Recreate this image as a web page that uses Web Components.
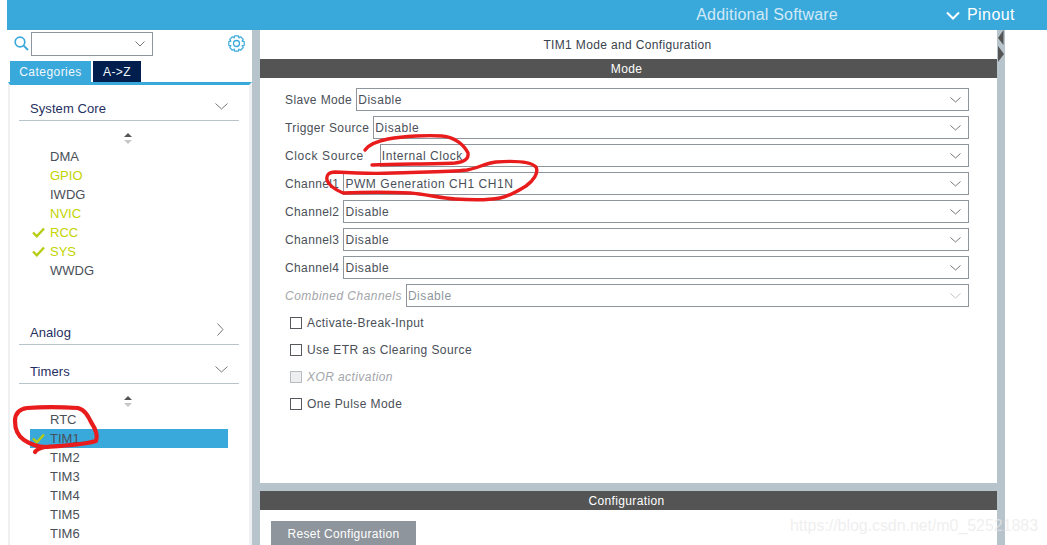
<!DOCTYPE html>
<html>
<head>
<meta charset="utf-8">
<style>
  html, body { margin: 0; padding: 0; background: #fff; }
  body { width: 1047px; height: 545px; overflow: hidden; position: relative; font: 12px "Liberation Sans", Arial, sans-serif; }
</style>
</head>
<body>
<cube-app>
  <cube-topbar></cube-topbar>
  <cube-sidebar slot="side">
    <cube-category title="System Core" open>
      <cube-item>DMA</cube-item>
      <cube-item state="warn">GPIO</cube-item>
      <cube-item>IWDG</cube-item>
      <cube-item state="warn">NVIC</cube-item>
      <cube-item state="warn" checked>RCC</cube-item>
      <cube-item state="warn" checked>SYS</cube-item>
      <cube-item>WWDG</cube-item>
    </cube-category>
    <cube-category title="Analog" style="margin-top:40px"></cube-category>
    <cube-category title="Timers" open style="margin-top:14px">
      <cube-item>RTC</cube-item>
      <cube-item checked selected>TIM1</cube-item>
      <cube-item>TIM2</cube-item>
      <cube-item>TIM3</cube-item>
      <cube-item>TIM4</cube-item>
      <cube-item>TIM5</cube-item>
      <cube-item>TIM6</cube-item>
    </cube-category>
  </cube-sidebar>
  <cube-mode-panel slot="main">
    <cube-select label="Slave Mode" value="Disable"></cube-select>
    <cube-select label="Trigger Source" value="Disable"></cube-select>
    <cube-select label="Clock Source" value="Internal Clock" gap="16" style="--label-track:.62px"></cube-select>
    <cube-select label="Channel1" value="PWM Generation CH1 CH1N"></cube-select>
    <cube-select label="Channel2" value="Disable"></cube-select>
    <cube-select label="Channel3" value="Disable"></cube-select>
    <cube-select label="Channel4" value="Disable"></cube-select>
    <cube-select label="Combined Channels" value="Disable" disabled></cube-select>
    <cube-check style="margin-top:-3px">Activate-Break-Input</cube-check>
    <cube-check>Use ETR as Clearing Source</cube-check>
    <cube-check disabled>XOR activation</cube-check>
    <cube-check>One Pulse Mode</cube-check>
  </cube-mode-panel>
</cube-app>
<cube-overlay></cube-overlay>

<script>
// 8 tooth gear outline, easier than typing the points out
function gearPath(cx, cy, outer, inner) {
  let d = '';
  for (let i = 0; i < 8; i++) {
    const a = i * Math.PI / 4;
    [[-0.42, inner], [-0.24, outer], [0.24, outer], [0.42, inner]].forEach(([off, r], j) => {
      const x = (cx + r * Math.sin(a + off)).toFixed(2);
      const y = (cy - r * Math.cos(a + off)).toFixed(2);
      d += (i === 0 && j === 0 ? 'M' : 'L') + x + ' ' + y;
    });
  }
  return d + 'Z';
}

// top blue header
class CubeTopbar extends HTMLElement {
  connectedCallback() {
    this.attachShadow({mode: 'open'}).innerHTML = `
      <style>
        :host { display: flex; align-items: center; height: 30px; margin-left: 7px; padding-right: 32px; background: #39a9dc; color: #fff; font-size: 16px; letter-spacing: .45px; }
        .soft { color: #d3e9f6; margin-left: auto; margin-right: 108px; letter-spacing: .2px; }
        svg { width: 14px; height: 9px; margin-right: 7px; }
      </style>
      <span class="soft">Additional Software</span>
      <svg viewBox="0 0 14 9"><path d="M1 1.5 7 7.5 13 1.5" fill="none" stroke="#fff" stroke-width="2"/></svg>
      <span>Pinout</span>
    `;
  }
}

// frame with the two gray gutters
class CubeApp extends HTMLElement {
  connectedCallback() {
    this.attachShadow({mode: 'open'}).innerHTML = `
      <style>
        :host { display: block; height: 545px; overflow: hidden; }
        .body { display: grid; grid-template-columns: 245px 8px 737px 8px; margin-left: 7px; height: 515px; }
        .gutter { background: #b8c4cb; }
        .arrows { position: relative; }
        .arrows svg { position: absolute; left: 0; top: 0; width: 8px; height: 42px; }
      </style>
      <slot></slot>
      <div class="body">
        <slot name="side"></slot>
        <div class="gutter"></div>
        <slot name="main"></slot>
        <div class="gutter arrows">
          <svg viewBox="0 0 8 42"><path d="M6.5 0V15L1 8Z M1 16V32L7 24Z" fill="#555"/></svg>
        </div>
      </div>
    `;
  }
}

class CubeSidebar extends HTMLElement {
  connectedCallback() {
    this.attachShadow({mode: 'open'}).innerHTML = `
      <style>
        :host { display: block; overflow: hidden; }
        .search { display: flex; align-items: flex-start; height: 31px; box-sizing: border-box; padding: 2px 7px 0 7px; }
        .lens { width: 15px; height: 15px; margin-top: 4px; margin-right: 2px; }
        .combo { width: 122px; height: 24px; box-sizing: border-box; border: 1px solid #8e959c; display: flex; align-items: center; justify-content: flex-end; padding-right: 7px; }
        .combo svg { width: 10px; height: 6px; }
        .gear { width: 17px; height: 17px; margin-left: auto; margin-top: 3px; }
        .tabs { display: flex; gap: 2px; height: 21px; padding-left: 3px; font-size: 12px; letter-spacing: .45px; color: #f2f7fb; }
        .tab { display: flex; align-items: center; justify-content: center; height: 21px; }
        .cat { width: 81px; background: #39a9dc; }
        .az { width: 48px; background: #001f4f; }
        .panel { margin-left: 1px; height: 463px; border-top: 3px solid #39a9dc; border-left: 2px solid #eef0f1; border-right: 3px solid #eef0f1; padding: 11px 10px 0 9px; }
      </style>
      <div class="search">
        <svg class="lens" viewBox="0 0 15 15"><circle cx="6" cy="6" r="4.8" fill="none" stroke="#39a9dc" stroke-width="1.7"/><path d="M9.6 9.6 14 14" stroke="#39a9dc" stroke-width="2"/></svg>
        <div class="combo"><svg viewBox="0 0 10 6"><path d="M.5 .5 5 5 9.5 .5" fill="none" stroke="#777" stroke-width="1"/></svg></div>
        <svg class="gear" viewBox="0 0 17 17"><path fill="none" stroke="#39a9dc" stroke-width="1.2" stroke-linejoin="round" d="${gearPath(8.5, 8.5, 7.9, 6.1)}"/><circle cx="8.5" cy="8.5" r="3" fill="none" stroke="#39a9dc" stroke-width="1.3"/></svg>
      </div>
      <div class="tabs"><div class="tab cat">Categories</div><div class="tab az">A-&gt;Z</div></div>
      <div class="panel"><slot></slot></div>
    `;
  }
}

class CubeCategory extends HTMLElement {
  connectedCallback() {
    const open = this.hasAttribute('open');
    const chevron = open ? 'M.5 .5 6.5 6 12.5 .5' : 'M.5 .5 6 6.5 .5 12.5';
    this.attachShadow({mode: 'open'}).innerHTML = `
      <style>
        :host { display: block; }
        .head { display: flex; align-items: center; justify-content: space-between; width: 220px; box-sizing: border-box; padding: 0 11px 0 11px; border-bottom: 1px solid #b8c4cb; color: #1f2f5f; font-size: 13px; letter-spacing: .08px; height: 25px; }
        .head svg { width: ${open ? 13 : 7}px; height: ${open ? 7 : 13}px; margin-top: ${open ? -3 : -5}px; margin-right: ${open ? 0 : 4}px; }
        .arrows { display: block; width: 10px; height: 11px; margin: 12px 0 3px 104px; }
        .list { width: 198px; margin-left: 11px; }
      </style>
      <div class="head"><span>${this.getAttribute('title')}</span>
        <svg viewBox="0 0 ${open ? '13 7' : '7 13'}"><path d="${chevron}" fill="none" stroke="#777" stroke-width="1"/></svg></div>
      ${open ? `<svg class="arrows" viewBox="0 0 10 11"><path d="M5 0 9 4H1Z" fill="#555"/><path d="M5 11 9 7H1Z" fill="#c8c8c8"/></svg>
      <div class="list"><slot></slot></div>` : ''}
    `;
  }
}

class CubeItem extends HTMLElement {
  connectedCallback() {
    const warn = this.getAttribute('state') === 'warn';
    const selected = this.hasAttribute('selected');
    const check = this.hasAttribute('checked');
    this.attachShadow({mode: 'open'}).innerHTML = `
      <style>
        :host { display: flex; align-items: center; height: 19px; font-size: 13px; color: ${warn ? '#c3d400' : '#4a4f58'}; background: ${selected ? '#39a9dc' : 'none'}; }
        .mark { width: 20px; height: 19px; display: flex; align-items: center; justify-content: center; padding-right: 3px; box-sizing: border-box; }
        svg { width: 13px; height: 11px; }
      </style>
      <span class="mark">${check ? '<svg viewBox="0 0 13 11"><path d="M1 5.5 4.8 9.3 12 1.5" fill="none" stroke="#b7cc12" stroke-width="2.4"/></svg>' : ''}</span>
      <slot></slot>
    `;
  }
}

class CubeModePanel extends HTMLElement {
  connectedCallback() {
    this.attachShadow({mode: 'open'}).innerHTML = `
      <style>
        :host { display: block; overflow: hidden; background: #fff; }
        .title { height: 29px; display: flex; align-items: center; justify-content: center; color: #39424c; letter-spacing: .35px; padding-right: 2px; }
        .bar { height: 19px; background: #535453; color: #fff; display: flex; align-items: center; justify-content: center; letter-spacing: .35px; padding-right: 4px; }
        .rows { height: 405px; box-sizing: border-box; padding: 10px 28px 0 25px; }
        .sep { height: 8px; background: #b8c4cb; }
        .foot { padding: 11px; }
        .reset { width: 145px; height: 26px; background: #8e959c; color: #fff; display: flex; align-items: center; justify-content: center; letter-spacing: .3px; }
      </style>
      <div class="title">TIM1 Mode and Configuration</div>
      <div class="bar">Mode</div>
      <div class="rows"><slot></slot></div>
      <div class="sep"></div>
      <div class="bar">Configuration</div>
      <div class="foot"><div class="reset">Reset Configuration</div></div>
    `;
  }
}

class CubeSelect extends HTMLElement {
  connectedCallback() {
    const off = this.hasAttribute('disabled');
    this.attachShadow({mode: 'open'}).innerHTML = `
      <style>
        :host { display: flex; align-items: center; height: 23px; margin-bottom: 5px; color: #4a4f58; letter-spacing: .55px; gap: ${this.getAttribute('gap') || 4}px; }
        .label { white-space: nowrap; letter-spacing: var(--label-track, .38px); ${off ? 'font-style: italic; color: #a3a6aa; letter-spacing: .48px;' : ''} }
        .box { flex: 1; height: 23px; box-sizing: border-box; border: 1px solid #8e959c; display: flex; align-items: center; justify-content: space-between; padding: 0 7px 0 1px; ${off ? 'color: #8e959c;' : ''} }
        svg { width: 11px; height: 6px; }
      </style>
      <span class="label">${this.getAttribute('label')}</span>
      <div class="box"><span>${this.getAttribute('value')}</span>
        <svg viewBox="0 0 11 6"><path d="M.5 .5 5.5 5 10.5 .5" fill="none" stroke="${off ? '#c0c4c8' : '#777'}" stroke-width="1"/></svg></div>
    `;
  }
}

class CubeCheck extends HTMLElement {
  connectedCallback() {
    const off = this.hasAttribute('disabled');
    this.attachShadow({mode: 'open'}).innerHTML = `
      <style>
        :host { display: flex; align-items: center; height: 27px; padding-left: 5px; gap: 5px; color: ${off ? '#a3a6aa' : '#4a4f58'}; letter-spacing: .42px; ${off ? 'font-style: italic;' : ''} }
        .tick { width: 12px; height: 12px; box-sizing: border-box; border: 1px solid ${off ? '#b8bcc0' : '#55585c'}; background: ${off ? '#eceeef' : '#fff'}; }
      </style>
      <span class="tick"></span><slot></slot>
    `;
  }
}

// hand drawn red marks and the blog watermark, both on top of the screenshot
class CubeOverlay extends HTMLElement {
  connectedCallback() {
    this.attachShadow({mode: 'open'}).innerHTML = `
      <style>
        :host { display: block; position: absolute; inset: 0; pointer-events: none; }
        svg { position: absolute; left: 0; top: 0; }
        .mark { position: absolute; left: 790px; top: 517px; font-size: 16px; letter-spacing: -.06px; color: rgba(232,232,232,.7); white-space: nowrap; }
      </style>
      <svg width="1047" height="545" fill="none" stroke="#e81c1c" stroke-linecap="round" stroke-linejoin="round">
        <path stroke-width="3.4" d="M365 150C369 144 378 141 388 139C404 136 428 135 442 136C455 137 464 145 468 153C469 159 464 162 455 163C430 164 398 164 372 165"/>
        <path stroke-width="3.4" d="M343 193C336 190 329 186 327 180C326 175 329 172 335 172C352 173 372 174 393 173C420 172 450 172 467 170C478 168 486 163 496 162C510 161 530 161 536 167C539 173 533 181 526 186C518 191 510 196 500 198C485 201 470 200 455 199C440 198 425 194 410 193C390 192 365 192 343 193Z"/>
        <path stroke-width="4.2" d="M35 452C37 449 40 448 45 447C60 446 82 445 96 441C98 436 95 428 91 422C88 416 85 410 78 408C62 407 40 407 27 408C19 409 15 414 15 421C15 429 18 436 24 440C30 444 38 447 46 447"/>
      </svg>
      <span class="mark">https://blog.csdn.net/m0_52521883</span>
    `;
  }
}

customElements.define('cube-topbar', CubeTopbar);
customElements.define('cube-app', CubeApp);
customElements.define('cube-sidebar', CubeSidebar);
customElements.define('cube-category', CubeCategory);
customElements.define('cube-item', CubeItem);
customElements.define('cube-mode-panel', CubeModePanel);
customElements.define('cube-select', CubeSelect);
customElements.define('cube-check', CubeCheck);
customElements.define('cube-overlay', CubeOverlay);
</script>
</body>
</html>
